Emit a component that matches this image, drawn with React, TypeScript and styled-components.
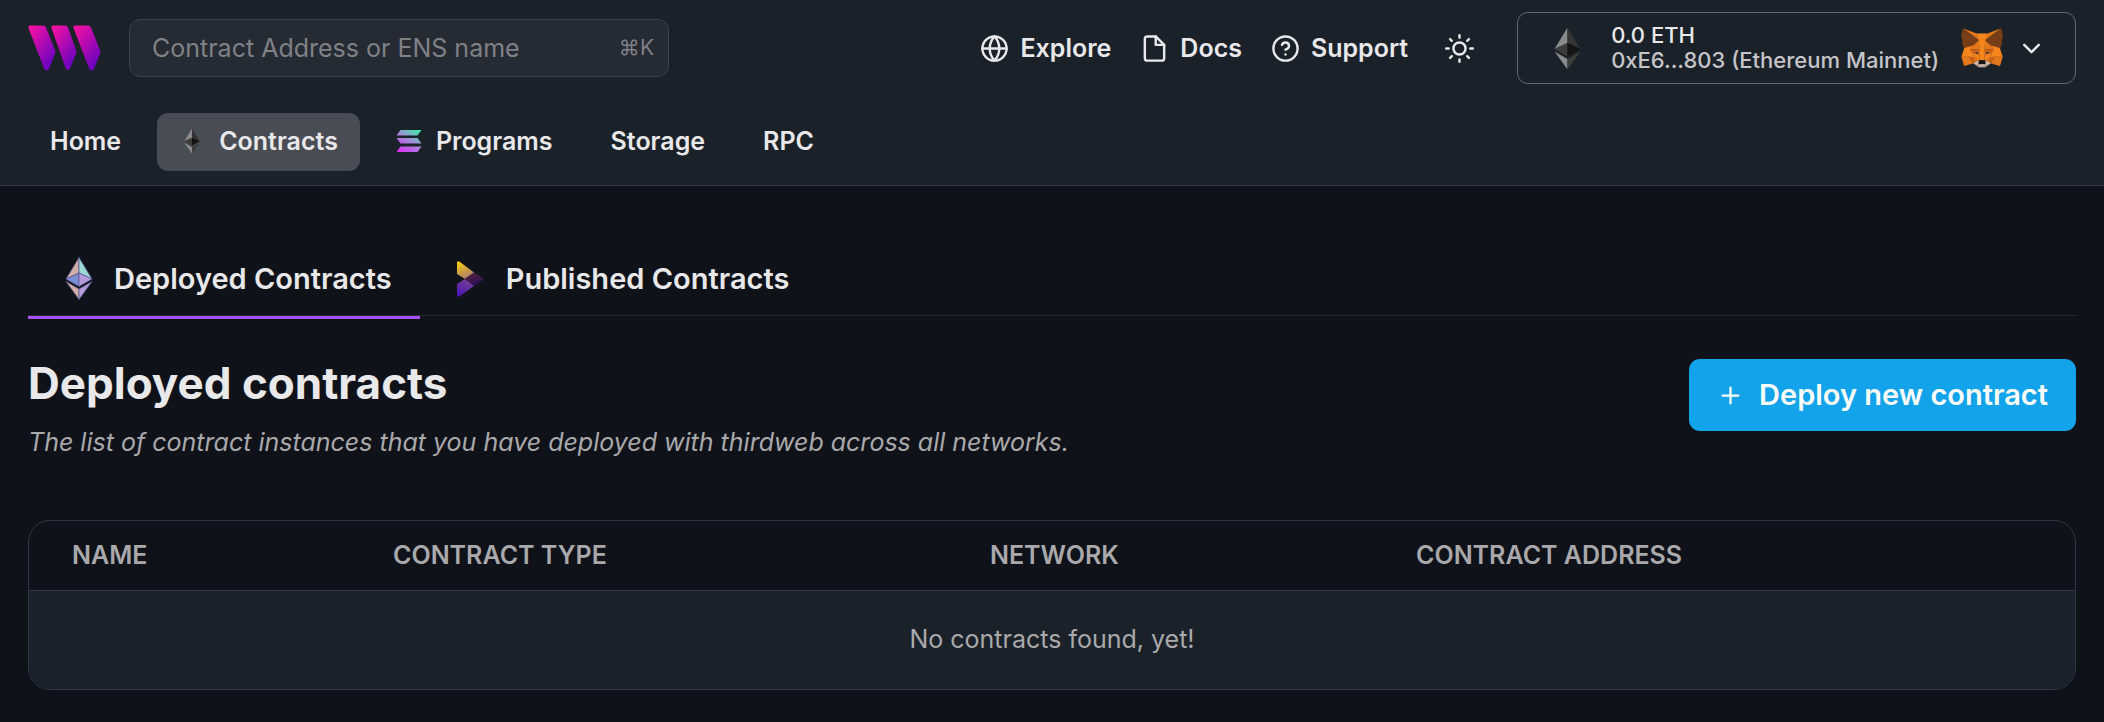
import React from "react";
import styled, { createGlobalStyle } from "styled-components";
import { FiChevronDown, FiFile, FiGlobe, FiHelpCircle, FiPlus, FiSun } from "react-icons/fi";

const c = {
  page: "#0f1218",
  panel: "#1b2129",
  field: "#262a33",
  border: "#33363e",
  text: "#e9e8ea",
  muted: "#a9a9ac",
  dim: "#7f8186",
  accent: "#a851f5",
  primary: "#12a3eb",
};

const GlobalStyle = createGlobalStyle`
  *, *::before, *::after { box-sizing: border-box; }
  body {
    margin: 0;
    background: ${c.page};
    color: ${c.text};
    font-family: Inter, "Liberation Sans", sans-serif;
    font-size: 25px;
    line-height: 32px;
  }
  button, input { font: inherit; color: inherit; }
  a { color: inherit; text-decoration: none; }
  svg { display: block; flex: none; }
`;

const Header = styled.header`
  background: ${c.panel};
  border-bottom: 1px solid ${c.border};
`;

const TopBar = styled.div`
  display: flex;
  align-items: center;
  justify-content: space-between;
  gap: 28px;
  padding: 12px 28px 0;
`;

const Group = styled.div`
  display: flex;
  align-items: center;
  gap: 28px;
`;

const Search = styled.label`
  display: flex;
  align-items: center;
  width: 540px;
  height: 58px;
  padding: 0 14px 0 22px;
  background: ${c.field};
  border: 1px solid #3d4048;
  border-radius: 11px;
  color: ${c.dim};
`;

const SearchInput = styled.input`
  flex: 1;
  min-width: 0;
  padding: 0;
  border: 0;
  outline: 0;
  background: none;
  &::placeholder { color: ${c.dim}; opacity: 1; }
`;

const Shortcut = styled.span`
  font-size: 21px;
`;

const HeaderLinks = styled.nav`
  display: flex;
  align-items: center;
  gap: 29px;
  font-weight: 600;
`;

const IconLink = styled.a`
  display: flex;
  align-items: center;
  gap: 11px;
`;

const IconButton = styled.button`
  display: flex;
  padding: 0 15px 0 9px;
  border: 0;
  background: none;
`;

const Wallet = styled.button`
  display: flex;
  align-items: center;
  gap: 14px;
  height: 72px;
  padding: 0 29px 0 36px;
  background: none;
  border: 1px solid #64676d;
  border-radius: 11px;
  text-align: left;
  font-size: 22px;
  font-weight: 500;
  line-height: 25px;
`;

const WalletText = styled.span`
  display: flex;
  flex-direction: column;
  margin: 0 8px 0 16px;
`;

const Address = styled.span`
  color: #c5c5c9;
`;

const MainNav = styled.nav`
  display: flex;
  gap: 14px;
  padding: 29px 28px 14px;
  font-weight: 600;
`;

const NavLink = styled.a<{ $active?: boolean }>`
  display: flex;
  align-items: center;
  gap: 14px;
  height: 58px;
  padding: 0 22px 2px;
  border-radius: 11px;
  background: ${(p) => (p.$active ? "#494c53" : "transparent")};
`;

const IconSlot = styled.span<{ $width: number }>`
  display: flex;
  justify-content: center;
  width: ${(p) => p.$width}px;
`;

const Main = styled.main`
  padding: 65px 28px 32px;
`;

const Tabs = styled.div`
  display: flex;
  height: 65px;
  border-bottom: 1px solid #26292f;
`;

const Tab = styled.a<{ $active?: boolean }>`
  display: flex;
  align-items: center;
  gap: 21px;
  height: 68px;
  padding: 6px 28px 16px 36px;
  border-bottom: 3px solid ${(p) => (p.$active ? c.accent : "transparent")};
  font-size: 29px;
  font-weight: 600;
`;

const Intro = styled.section`
  display: flex;
  align-items: flex-start;
  justify-content: space-between;
  padding: 43px 0 62px;
`;

const Title = styled.h1`
  margin: 0 0 18px;
  font-size: 44px;
  line-height: 49px;
  font-weight: 700;
`;

const Subtitle = styled.p`
  margin: 0;
  font-style: italic;
  color: ${c.muted};
`;

const PrimaryButton = styled.button`
  display: flex;
  align-items: center;
  gap: 15px;
  height: 72px;
  padding: 0 28px;
  border: 0;
  border-radius: 11px;
  background: ${c.primary};
  color: #fff;
  font-size: 29px;
  font-weight: 600;
`;

const TableCard = styled.div`
  overflow: hidden;
  border: 1px solid ${c.border};
  border-radius: 22px;
`;

const Table = styled.table`
  width: 100%;
  table-layout: fixed;
  border-collapse: collapse;
`;

const HeadCell = styled.th<{ $width: string }>`
  width: ${(p) => p.$width};
  height: 69px;
  padding: 0 0 0 43px;
  border-bottom: 1px solid ${c.border};
  color: ${c.muted};
  text-align: left;
  text-transform: uppercase;
  font-weight: 600;
`;

const EmptyCell = styled.td`
  height: 99px;
  padding: 0 0 2px;
  background: ${c.panel};
  color: ${c.muted};
  text-align: center;
`;

function Logo() {
  return (
    <svg width="73" height="46" viewBox="0 0 73 46" role="img" aria-label="thirdweb">
      <defs>
        <linearGradient id="tw" x1="0" y1="0" x2="0.75" y2="1">
          <stop offset="0" stopColor="#ff12a0" />
          <stop offset="0.9" stopColor="#7204bd" />
        </linearGradient>
      </defs>
      <g fill="url(#tw)">
        <path d="M2 0.500H15Q17 0.500 18 2.500L27 25Q28 27 27 29L21 44Q20 45.500 18.500 45.500Q17 45.500 16 43.500L0.500 3Q0 0.500 2 0.500Z" />
        <path d="M25 0.500H37Q39 0.500 40 2.500L48 25Q49 27 48 29L42 43.500Q41 45 40 45Q38.500 45 37.500 43L23.500 3Q23 0.500 25 0.500Z" />
        <path d="M47 0.500H60Q62 0.500 63 2.500L72 25Q73 27 72 29L66 44Q65 45.500 63.500 45.500Q62 45.500 61 43.500L45.500 3Q45 0.500 47 0.500Z" />
      </g>
    </svg>
  );
}

type EthColors = [string, string, string, string, string, string];
const greyEth: EthColors = ["#8a8a8a", "#343434", "#3c3c3b", "#141414", "#8a8a8a", "#3c3c3b"];
const tintedEth: EthColors = ["#d0aea6", "#9ad9d4", "#7b90d4", "#b49bdb", "#d0aea6", "#b49bdb"];

function Ethereum({ width, height, colors, stroke }: { width: number; height: number; colors: EthColors; stroke?: string }) {
  return (
    <svg width={width} height={height} viewBox="0 0 27 43" aria-hidden="true">
      <g stroke={stroke} strokeWidth={stroke ? 0.7 : 0} strokeLinejoin="round">
        <path fill={colors[0]} d="M13.500 0.500V16L0.500 22Z" />
        <path fill={colors[1]} d="M13.500 0.500V16L26.500 22Z" />
        <path fill={colors[2]} d="M13.500 16V29.500L0.500 22Z" />
        <path fill={colors[3]} d="M13.500 16V29.500L26.500 22Z" />
        <path fill={colors[4]} d="M13.500 32V42.500L0.500 24.500Z" />
        <path fill={colors[5]} d="M13.500 32V42.500L26.500 24.500Z" />
      </g>
    </svg>
  );
}

function Solana() {
  return (
    <svg width="26" height="22" viewBox="0 0 25 22" aria-hidden="true">
      <defs>
        <linearGradient id="sol" gradientUnits="userSpaceOnUse" x1="22" y1="-2" x2="6" y2="24">
          <stop offset="0" stopColor="#2ff7a4" />
          <stop offset="0.5" stopColor="#a58ad8" />
          <stop offset="1" stopColor="#db30fb" />
        </linearGradient>
      </defs>
      <path fill="url(#sol)" d="M4 0H25L21 5.500H0ZM0 8H21L25 13.500H4ZM4 16.500H25L21 22H0Z" />
    </svg>
  );
}

function Publish() {
  return (
    <svg width="27" height="36" viewBox="0 0 27 36" aria-hidden="true">
      <defs>
        <linearGradient id="pubTop" x1="0.200" y1="0" x2="0.600" y2="1">
          <stop offset="0" stopColor="#f8cb0c" />
          <stop offset="1" stopColor="#a87972" />
        </linearGradient>
        <linearGradient id="pubBottom" x1="0.700" y1="0" x2="0.200" y2="1">
          <stop offset="0" stopColor="#784391" />
          <stop offset="1" stopColor="#4a12b4" />
        </linearGradient>
        <linearGradient id="pubTip" x1="0" y1="0" x2="0.300" y2="1">
          <stop offset="0" stopColor="#55283d" />
          <stop offset="1" stopColor="#2a0c55" />
        </linearGradient>
      </defs>
      <path fill="url(#pubTop)" d="M0 1Q1 -0.500 3 1L17 11.500L8 18L0 13Z" />
      <path fill="url(#pubTip)" d="M17 11.500L26 17Q27 18 26 19L17 25L8 18Z" />
      <path fill="url(#pubBottom)" d="M0 23L8 18L17 25L3 35Q1 36.500 0 35Z" />
    </svg>
  );
}

const foxFacets: [string, string][] = [
  ["#e2761b", "274.1 35.5 174.6 109.4 193 65.8"],
  ["#e4761b", "44.4 35.5 143.1 110.1 125.6 65.8"],
  ["#e4761b", "238.3 206.8 211.8 247.4 268.5 263 284.8 207.7"],
  ["#e4761b", "33.9 207.7 50.1 263 106.8 247.4 80.3 206.8"],
  ["#e4761b", "103.6 138.2 87.8 162.1 144.1 164.6 142.1 104.1"],
  ["#e4761b", "214.9 138.2 175.9 103.4 174.6 164.6 230.8 162.1"],
  ["#e4761b", "106.8 247.4 140.6 230.9 111.4 208.1"],
  ["#e4761b", "177.9 230.9 211.8 247.4 207.1 208.1"],
  ["#d7c1b3", "211.8 247.4 177.9 230.9 180.6 253 180.3 262.3"],
  ["#d7c1b3", "106.8 247.4 138.3 262.3 138.1 253 140.6 230.9"],
  ["#233447", "138.8 193.5 110.6 185.2 130.5 176.1"],
  ["#233447", "179.7 193.5 188 176.1 208 185.2"],
  ["#cd6116", "106.8 247.4 111.6 206.8 80.3 207.7"],
  ["#cd6116", "207 206.8 211.8 247.4 238.3 207.7"],
  ["#cd6116", "230.8 162.1 174.6 164.6 179.8 193.5 188.1 176.1 208.1 185.2"],
  ["#cd6116", "110.6 185.2 130.6 176.1 138.8 193.5 144.1 164.6 87.8 162.1"],
  ["#e4751f", "87.8 162.1 111.4 208.1 110.6 185.2"],
  ["#e4751f", "208.1 185.2 207.1 208.1 230.8 162.1"],
  ["#e4751f", "144.1 164.6 138.8 193.5 145.4 227.6 146.9 182.7"],
  ["#e4751f", "174.6 164.6 171.9 182.6 173.1 227.6 179.8 193.5"],
  ["#f6851b", "179.8 193.5 173.1 227.6 177.9 230.9 207.1 208.1 208.1 185.2"],
  ["#f6851b", "110.6 185.2 111.4 208.1 140.6 230.9 145.4 227.6 138.8 193.5"],
  ["#c0ad9e", "180.3 262.3 180.6 253 178.1 250.8 140.4 250.8 138.1 253 138.3 262.3 106.8 247.4 117.8 256.4 140.1 271.9 178.4 271.9 200.8 256.4 211.8 247.4"],
  ["#161616", "177.9 230.9 173.1 227.6 145.4 227.6 140.6 230.9 138.1 253 140.4 250.8 178.1 250.8 180.6 253"],
  ["#763d16", "278.3 114.2 286.8 73.4 274.1 35.5 177.9 106.9 214.9 138.2 267.2 153.5 278.8 140 273.8 136.4 281.8 129.1 275.6 124.3 283.6 118.2"],
  ["#763d16", "31.8 73.4 40.3 114.2 34.9 118.2 42.9 124.3 36.8 129.1 44.8 136.4 39.8 140 51.3 153.5 103.6 138.2 140.6 106.9 44.4 35.5"],
  ["#f6851b", "267.2 153.5 214.9 138.2 230.8 162.1 207.1 208.1 238.3 207.7 284.8 207.7"],
  ["#f6851b", "103.6 138.2 51.3 153.5 33.9 207.7 80.3 207.7 111.4 208.1 87.8 162.1"],
  ["#f6851b", "174.6 164.6 177.9 106.9 193.1 65.8 125.6 65.8 140.6 106.9 144.1 164.6 145.3 182.8 145.4 227.6 173.1 227.6 173.3 182.8"],
];

function Fox() {
  return (
    <svg width="42" height="40" viewBox="31 35 256 238" aria-hidden="true">
      {foxFacets.map(([fill, points], i) => (
        <polygon key={i} fill={fill} stroke={fill} points={points} />
      ))}
    </svg>
  );
}

const columns: [string, string][] = [
  ["Name", "321px"],
  ["Contract type", "597px"],
  ["Network", "426px"],
  ["Contract address", "auto"],
];

export default function App() {
  return (
    <>
      <GlobalStyle />
      <Header>
        <TopBar>
          <Group>
            <a href="#home"><Logo /></a>
            <Search>
              <SearchInput type="text" aria-label="Contract Address or ENS name" placeholder="Contract Address or ENS name" />
              <Shortcut>⌘K</Shortcut>
            </Search>
          </Group>
          <Group>
            <HeaderLinks aria-label="Resources">
              <IconLink href="#explore"><FiGlobe size={29} />Explore</IconLink>
              <IconLink href="#docs"><FiFile size={29} />Docs</IconLink>
              <IconLink href="#support"><FiHelpCircle size={29} />Support</IconLink>
            </HeaderLinks>
            <IconButton type="button" aria-label="Toggle colour mode"><FiSun size={29} /></IconButton>
            <Wallet type="button">
              <Ethereum width={27} height={43} colors={greyEth} />
              <WalletText>
                <span>0.0 ETH</span>
                <Address>0xE6...803 (Ethereum Mainnet)</Address>
              </WalletText>
              <Fox />
              <FiChevronDown size={29} />
            </Wallet>
          </Group>
        </TopBar>
        <MainNav aria-label="Main">
          <NavLink href="#home">Home</NavLink>
          <NavLink href="#contracts" $active aria-current="page">
            <IconSlot $width={26}><Ethereum width={16} height={26} colors={greyEth} /></IconSlot>
            Contracts
          </NavLink>
          <NavLink href="#programs">
            <IconSlot $width={26}><Solana /></IconSlot>
            Programs
          </NavLink>
          <NavLink href="#storage">Storage</NavLink>
          <NavLink href="#rpc">RPC</NavLink>
        </MainNav>
      </Header>
      <Main>
        <Tabs>
          <Tab href="#deployed" $active>
            <IconSlot $width={29}><Ethereum width={28} height={43} colors={tintedEth} stroke="#5a5590" /></IconSlot>
            Deployed Contracts
          </Tab>
          <Tab href="#published">
            <IconSlot $width={29}><Publish /></IconSlot>
            Published Contracts
          </Tab>
        </Tabs>
        <Intro>
          <div>
            <Title>Deployed contracts</Title>
            <Subtitle>The list of contract instances that you have deployed with thirdweb across all networks.</Subtitle>
          </div>
          <PrimaryButton type="button"><FiPlus size={27} />Deploy new contract</PrimaryButton>
        </Intro>
        <TableCard>
          <Table>
            <thead>
              <tr>
                {columns.map(([label, width]) => (
                  <HeadCell key={label} scope="col" $width={width}>{label}</HeadCell>
                ))}
              </tr>
            </thead>
            <tbody>
              <tr><EmptyCell colSpan={4}>No contracts found, yet!</EmptyCell></tr>
            </tbody>
          </Table>
        </TableCard>
      </Main>
    </>
  );
}
